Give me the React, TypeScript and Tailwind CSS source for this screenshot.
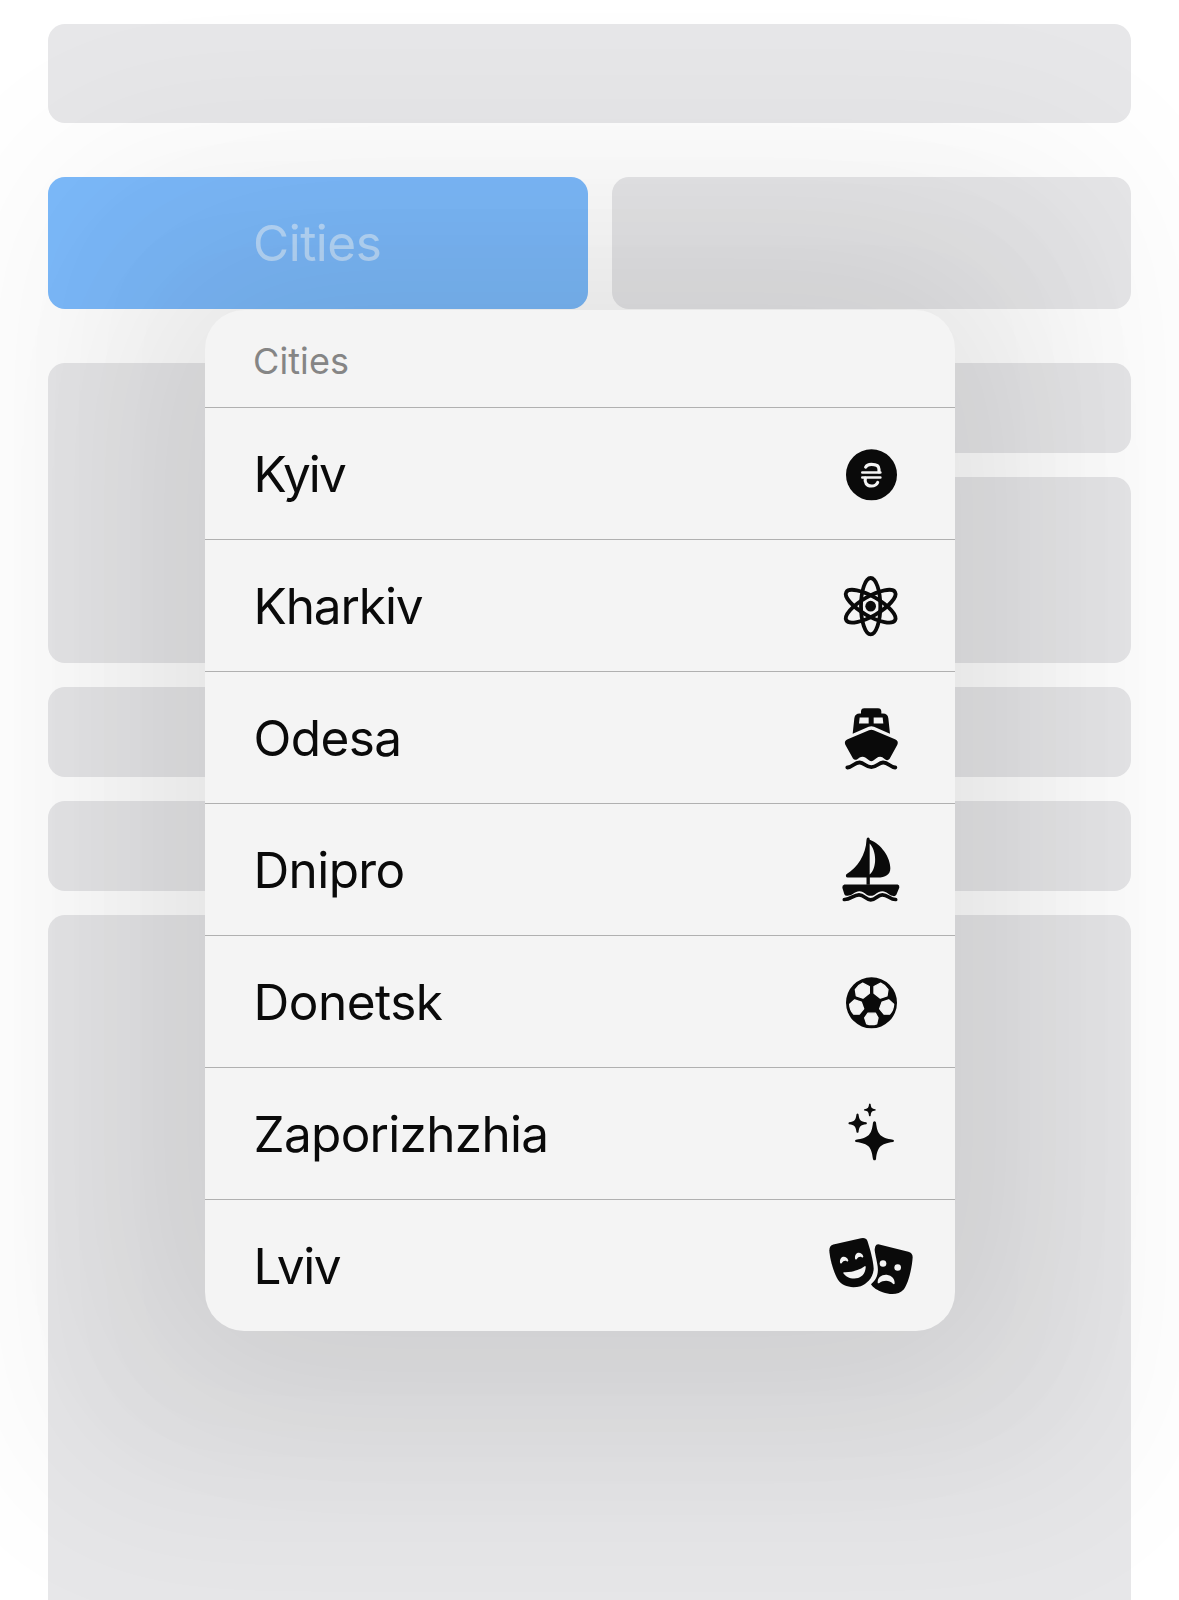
import React from "react";

const Hryvnia = () => (
  <svg viewBox="-15 -4.5 330 270" className="h-[90px] w-[110px]" fill="none">
    <circle cx="154.500" cy="133" r="76.500" fill="#0a0a0a" />
    <g stroke="#f4f4f4" strokeWidth="9.5" strokeLinecap="round">
      <path d="M137 110C140 104 146 101.500 154 101.500C167 101.500 177 106 177 116V124" />
      <path d="M136 143C133 156 140 166.500 154 166.500C164 166.500 170 163 173 156" />
      <path d="M127 126H181M127 141H181" strokeWidth="8" />
    </g>
  </svg>
);

const Atom = () => (
  <svg viewBox="-15 1.5 330 270" className="h-[90px] w-[110px]" fill="none">
    <g stroke="#0a0a0a" strokeWidth="11.5">
      <ellipse cx="152" cy="137" rx="29" ry="84.500" />
      <ellipse cx="152" cy="137" rx="29" ry="84.500" transform="rotate(60 152 137)" />
      <ellipse cx="152" cy="137" rx="29" ry="84.500" transform="rotate(-60 152 137)" />
    </g>
    <circle cx="152" cy="137" r="16" fill="#0a0a0a" />
  </svg>
);

const Ferry = () => (
  <svg viewBox="-15 7.5 330 270" className="h-[90px] w-[110px]" fill="#0a0a0a">
    <path
      fillRule="evenodd"
      d="M123 69V63Q123 53 133 53H174Q184 53 184 63V69H189Q203 69 205 83L210 130L162 109Q154 106 146 109L98 130L103 83Q105 69 119 69ZM119 81H146V99H117ZM161 81H188L190 99H161Z"
    />
    <path d="M147 119Q154 116 161 119L225 146Q237 151 232 163L209 205Q203 212 196 207L187 200Q178 196 169 203L160 210Q154 214 148 210L137 202Q128 196 119 201L112 206Q104 211 99 204L76 163Q71 151 83 146Z" />
    <path
      d="M82 231C96 232 104 215 119 216C133 217 138 230 154 230C170 230 175 217 189 216C204 215 212 232 226 231"
      fill="none"
      stroke="#0a0a0a"
      strokeWidth="11.5"
      strokeLinecap="round"
    />
  </svg>
);

const Sailboat = () => (
  <svg viewBox="-15 -1.5 330 270" className="h-[90px] w-[110px]" fill="#0a0a0a">
    <path
      fillRule="evenodd"
      d="M139.500 43Q140 36 144.500 36Q149 36 149.500 43C184 56 211 96 211 128C211 147 196 156 173 156H149.500V178H139.500V156H83Q75 154 79 146C112 128 138 88 139.500 43ZM149 54V147C172 128 170 76 149 54Z"
    />
    <path d="M73 177H233Q239 178 238 186L229 208Q225 214 217 211C205 208 201 198 187 197C171 197 166 211 152 211C137 211 134 197 118 197C104 197 99 209 86 210Q76 213 73 206L67 187Q66 179 73 177Z" />
    <path
      d="M73 222C91 223 100 208 117 208C133 208 137 223 152 223C168 223 172 208 187 208C204 208 211 223 227 222"
      fill="none"
      stroke="#0a0a0a"
      strokeWidth="11"
      strokeLinecap="round"
    />
  </svg>
);

const SoccerBall = () => (
  <svg viewBox="-15 -10.5 330 270" className="h-[90px] w-[110px]">
    <circle cx="154.500" cy="127" r="76.500" fill="#0a0a0a" />
    <g fill="#f4f4f4" stroke="#f4f4f4" strokeWidth="4" strokeLinejoin="round">
      <path d="M128 68L148 78V98L129 113L109 106L106 87Q114 74 128 68Z" />
      <path d="M182 68Q196 74 204 87L201 106L181 113L162 98V78Z" />
      <path d="M104 118L124 125L131 145L118 161H101Q90 149 89 131Z" />
      <path d="M206 118L221 131Q220 149 209 161H192L179 145L186 125Z" />
      <path d="M144 158H166L174 172L170 190Q155 195 140 190L134 172Z" />
    </g>
  </svg>
);

const Sparkles = () => (
  <svg viewBox="-15 -4.5 330 270" className="h-[90px] w-[110px]" fill="#0a0a0a">
    <path d="M159 96Q163.500 89 168 96C172 132 181 142 219 147.500Q225 151 219 154.500C181 160 173 168 168 206Q163.500 213 159 206C154 168 147 160 108 154.500Q102 151 108 147.500C147 142 155 132 159 96Z" />
    <path d="M109.500 71Q112.500 67 115.500 71C118 90 121 92 139 95.500Q143 98.500 139 101.500C121 104 118 107 115.500 125Q112.500 129 109.500 125C107 107 104 104 87 101.500Q83 98.500 87 95.500C104 92 107 90 109.500 71Z" />
    <path d="M147 41Q149.500 37 152 41C153 52 156 54 166 56Q169 58 166 60C156 61 153 64 152 76Q149.500 79 147 76C146 64 143 61 133 60Q130 58 133 56C143 54 146 52 147 41Z" />
  </svg>
);

const Masks = () => (
  <svg viewBox="0 1.5 330 270" className="h-[90px] w-[110px]">
    <path
      fill="#0a0a0a"
      d="M181 77Q184 70 193 72L280 94Q293 98 293 110C291 142 280 190 266 207C252 223 226 223 203 215C188 209 174 202 168 191C184 179 191 160 188 138C185 116 179 96 179 86Z"
    />
    <path
      fill="#0a0a0a"
      d="M55 72L138 53Q153 50 157 61C166 88 174 119 176 143C176 172 155 190 137 197C108 205 82 197 69 178C55 154 44 113 43 89Q43 76 55 72Z"
    />
    <g fill="#f4f4f4">
      <path d="M87 155C109 156 132 149 149 137Q153 136 152 142C150 163 136 174 118 174C102 174 91 167 85 158Q84 155 87 155Z" />
      <path d="M188 185C188 171 200 162 215 163C231 165 240 177 239 189Q237 194 233 189C223 179 207 178 192 188Q188 190 188 185Z" />
      <circle cx="204" cy="129" r="10" />
      <circle cx="248" cy="141" r="10" />
      <path d="M75 126C73 105 95 104 100 120Q99 125 95 122C91 119 84 121 80 128Q76 131 75 126Z" />
      <path d="M120 114C118 93 140 92 145 108Q144 113 140 110C136 107 129 109 125 116Q121 119 120 114Z" />
    </g>
  </svg>
);

const cities = [
  { name: "Kyiv", Icon: Hryvnia, tracking: "tracking-[-1.9px]" },
  { name: "Kharkiv", Icon: Atom, tracking: "tracking-[-1.1px]" },
  { name: "Odesa", Icon: Ferry, tracking: "tracking-[-0.6px]" },
  { name: "Dnipro", Icon: Sailboat, tracking: "tracking-[-0.6px]" },
  { name: "Donetsk", Icon: SoccerBall, tracking: "tracking-[-0.5px]" },
  { name: "Zaporizhzhia", Icon: Sparkles, tracking: "tracking-[-0.7px]" },
  { name: "Lviv", Icon: Masks, tracking: "tracking-[-1.4px]" },
];

const Block = ({ className }: { className: string }) => (
  <div className={`rounded-[17px] bg-[#e7e7e9] ${className}`} />
);

export default function App() {
  return (
    <div className="relative h-[1600px] w-full overflow-hidden bg-white px-12 pt-6 font-['Inter',sans-serif]">
      <Block className="h-[99px]" />
      <div className="mt-[54px] flex h-[132px] gap-6">
        <button className="flex w-[540px] items-center rounded-[17px] bg-[#7cbafb] pl-[205px] pt-[2px] text-[49.5px] leading-none tracking-[-0.5px] text-[#b8dafc]">
          Cities
        </button>
        <Block className="flex-1" />
      </div>
      <div className="mt-[54px] grid h-[300px] grid-cols-2 gap-6">
        <Block className="h-full" />
        <div className="flex flex-col gap-6">
          <Block className="h-[90px]" />
          <Block className="flex-1" />
        </div>
      </div>
      <Block className="mt-6 h-[90px]" />
      <Block className="mt-6 h-[90px]" />
      <Block className="mt-6 h-[720px]" />

      <div
        role="menu"
        className="absolute left-[205px] top-[310px] w-[750px] rounded-[39px] bg-[#f4f4f4] shadow-[0_0_180px_180px_rgba(0,0,0,0.045),0_0_180px_40px_rgba(0,0,0,0.08)]"
      >
        <div className="flex h-[97px] items-center pl-[48px] pt-[4px] text-[36px] leading-none tracking-[0.1px] text-[#858585]">
          Cities
        </div>
        {cities.map(({ name, Icon, tracking }) => (
          <div
            key={name}
            role="menuitem"
            className="flex h-[132px] items-center justify-between border-t border-[#b0b0b0] pl-[48.5px] pr-[30px] text-[49.5px] leading-none text-[#0a0a0a]"
          >
            <span className={`pt-[2px] ${tracking}`}>{name}</span>
            <Icon />
          </div>
        ))}
      </div>
    </div>
  );
}
